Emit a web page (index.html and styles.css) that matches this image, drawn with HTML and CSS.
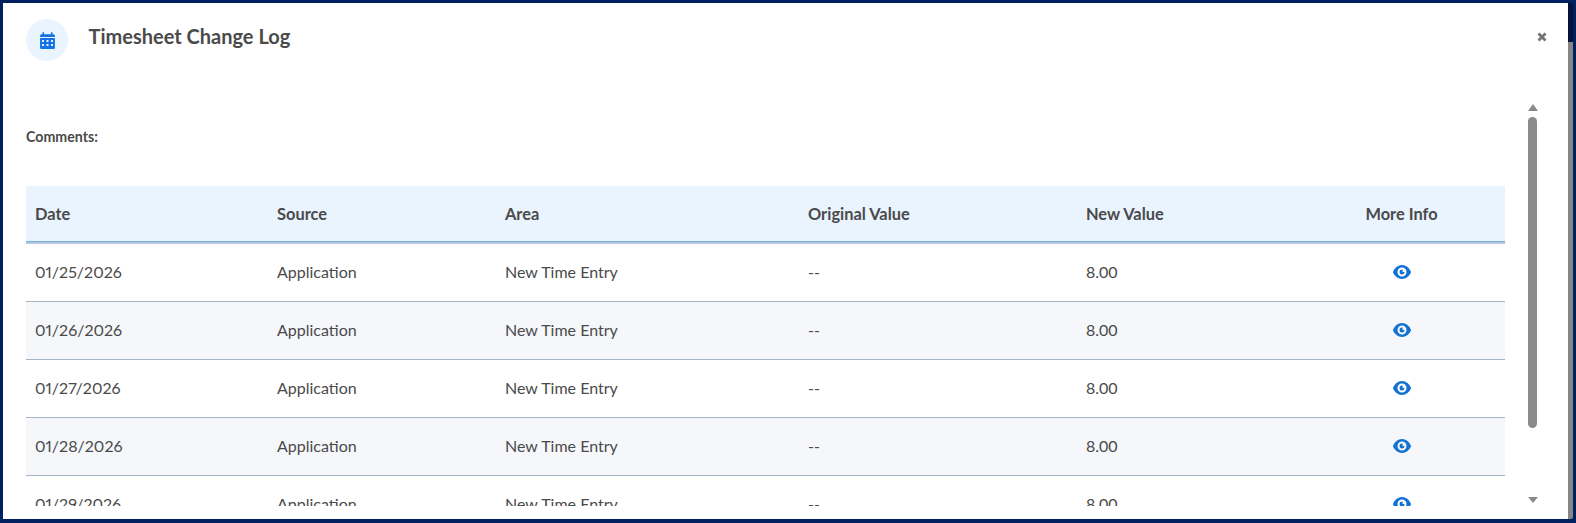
FILE: index.html
```html
<!DOCTYPE html>
<html lang="en">
<head>
    <meta charset="UTF-8">
    <title>Timesheet Change Log</title>
    <link rel="stylesheet" href="styles.css">
</head>
<body>

<div class="frame">
    <div class="modal">
        <div class="modal-header">
            <div class="icon-circle">
                <svg class="calendar-icon" viewBox="0 0 448 512"><path d="M96 0c13 0 24 11 24 24v40h208V24c0-13 11-24 24-24s24 11 24 24v40h24c35 0 48 29 48 64v24H0v-24c0-35 13-64 48-64h24V24C72 11 83 0 96 0zM0 184h448v280c0 27-21 48-48 48H48c-27 0-48-21-48-48V184zm72 56c-9 0-16 7-16 16v32c0 9 7 16 16 16h32c9 0 16-7 16-16v-32c0-9-7-16-16-16H72zm136 0c-9 0-16 7-16 16v32c0 9 7 16 16 16h32c9 0 16-7 16-16v-32c0-9-7-16-16-16h-32zm136 0c-9 0-16 7-16 16v32c0 9 7 16 16 16h32c9 0 16-7 16-16v-32c0-9-7-16-16-16h-32zM72 360c-9 0-16 7-16 16v32c0 9 7 16 16 16h32c9 0 16-7 16-16v-32c0-9-7-16-16-16H72zm136 0c-9 0-16 7-16 16v32c0 9 7 16 16 16h32c9 0 16-7 16-16v-32c0-9-7-16-16-16h-32zm136 0c-9 0-16 7-16 16v32c0 9 7 16 16 16h32c9 0 16-7 16-16v-32c0-9-7-16-16-16h-32z"/></svg>
            </div>
            <h1>Timesheet Change Log</h1>
            <svg class="close-icon" viewBox="0 0 10 10"><path d="M1.5 1.5l7 7M8.5 1.5l-7 7"/></svg>
        </div>

        <div class="modal-body">
            <div class="scroll-area">
                <p class="comments">Comments:</p>
                <table class="log-table">
                    <thead>
                        <tr>
                            <th class="col-date">Date</th>
                            <th class="col-source">Source</th>
                            <th class="col-area">Area</th>
                            <th class="col-original">Original Value</th>
                            <th class="col-new">New Value</th>
                            <th class="col-info">More Info</th>
                        </tr>
                    </thead>
                    <tbody>
                        <tr>
                            <td class="col-date">01/25/2026</td><td>Application</td><td>New Time Entry</td><td>--</td><td>8.00</td>
                            <td class="col-info"><svg class="eye-icon" viewBox="0 0 576 512"><use href="#eye"/></svg></td>
                        </tr>
                        <tr>
                            <td class="col-date">01/26/2026</td><td>Application</td><td>New Time Entry</td><td>--</td><td>8.00</td>
                            <td class="col-info"><svg class="eye-icon" viewBox="0 0 576 512"><use href="#eye"/></svg></td>
                        </tr>
                        <tr>
                            <td class="col-date">01/27/2026</td><td>Application</td><td>New Time Entry</td><td>--</td><td>8.00</td>
                            <td class="col-info"><svg class="eye-icon" viewBox="0 0 576 512"><use href="#eye"/></svg></td>
                        </tr>
                        <tr>
                            <td class="col-date">01/28/2026</td><td>Application</td><td>New Time Entry</td><td>--</td><td>8.00</td>
                            <td class="col-info"><svg class="eye-icon" viewBox="0 0 576 512"><use href="#eye"/></svg></td>
                        </tr>
                        <tr>
                            <td class="col-date">01/29/2026</td><td>Application</td><td>New Time Entry</td><td>--</td><td>8.00</td>
                            <td class="col-info"><svg class="eye-icon" viewBox="0 0 576 512"><use href="#eye"/></svg></td>
                        </tr>
                    </tbody>
                </table>
            </div>
            <div class="scrollbar">
                <span class="arrow-up"></span>
                <div class="thumb"></div>
                <span class="arrow-down"></span>
            </div>
        </div>
    </div>
    <div class="backdrop-strip"></div>
</div>

<svg class="icon-defs" width="0" height="0">
    <defs>
        <path id="eye" fill-rule="evenodd" d="M288 32C207 32 142 69 95 112 48 156 17 208 2 244c-3 8-3 17 0 25 15 36 46 88 93 131 47 44 112 80 193 80s146-36 193-80c47-43 78-95 93-131 3-8 3-17 0-25-15-36-46-88-93-132C434 69 369 32 288 32zm0 80a144 144 0 1 1 0 288 144 144 0 1 1 0-288zm0 64a80 80 0 1 0 78 62c-5 10-16 18-30 18-19 0-34-15-34-34 0-14 8-25 18-30-10-10-21-16-32-16z"/>
    </defs>
</svg>

</body>
</html>
```

FILE: styles.css
```css
html, body {
    margin: 0;
    height: 100%;
}

body {
    font-family: 'Lato', sans-serif;
    color: #4a4a4a;
    overflow: hidden;
}

.frame {
    box-sizing: border-box;
    height: 523px;
    display: flex;
    background-color: #00205f;
    padding: 3px 3px 4px 3px;
}

.modal {
    flex: 1;
    display: flex;
    flex-direction: column;
    min-width: 0;
    background-color: #ffffff;
    overflow: hidden;
}

.backdrop-strip {
    width: 5px;
    background: linear-gradient(#04133a 39px, #868686 39px);
    border-bottom-right-radius: 2px;
}

.modal-header {
    display: flex;
    align-items: flex-start;
    height: 94px;
    padding: 16px 0 0 23px;
    box-sizing: border-box;
    flex-shrink: 0;
}

.icon-circle {
    width: 42px;
    height: 42px;
    border-radius: 50%;
    background-color: #e9f4ff;
    display: flex;
    align-items: center;
    justify-content: center;
}

.calendar-icon {
    width: 15px;
    height: 17px;
    fill: #1473e6;
}

h1 {
    margin: 4px 0 0 20.5px;
    font-size: 20px;
    line-height: 26px;
    font-weight: 700;
    color: #4a4a4a;
}

.close-icon {
    width: 10px;
    height: 10px;
    margin: 13px 21px 0 auto;
    fill: none;
    stroke: #757575;
    stroke-width: 2.8;
}

.modal-body {
    flex: 1;
    display: flex;
    min-height: 0;
}

.scroll-area {
    flex: 1;
    min-width: 0;
    height: 409px;
    overflow: hidden;
    padding: 0 0 0 23px;
}

.comments {
    margin: 32px 0 0 0;
    font-size: 14.2px;
    line-height: 16px;
    font-weight: 700;
}

.log-table {
    width: 1479px;
    margin-top: 41px;
    border-collapse: collapse;
    table-layout: fixed;
    font-size: 16px;
}

.log-table th {
    height: 55px;
    padding: 0 9px 1px;
    text-align: left;
    font-weight: 700;
    font-size: 16.4px;
    background-color: #e9f4ff;
    border-bottom: 2px solid #b9c7d6;
    box-shadow: inset 0 -1px #6fb0de;
}

.log-table td {
    height: 55px;
    padding: 0 9px 2px;
    border-bottom: 1px solid #a3b5c6;
}

.log-table tbody tr:nth-child(even) td {
    background-color: #f5f7fb;
}

.col-date { width: 224px; }
.col-source { width: 210px; }
.col-area { width: 285px; }
.col-original { width: 260px; }
.col-new { width: 203px; }

.log-table td.col-date {
    font-variant-numeric: proportional-nums;
}

.log-table .col-info {
    text-align: center;
}

.log-table td.col-info {
    padding-bottom: 1px;
}

.eye-icon {
    display: block;
    width: 18px;
    height: 16px;
    margin: 0 auto;
    fill: #1473d2;
}

.icon-defs {
    position: absolute;
}

/* drawn scrollbar, the real one is hidden by the clip */
.scrollbar {
    width: 9px;
    margin: 7px 31px 0 20px;
    height: 402px;
    display: flex;
    flex-direction: column;
    align-items: center;
}

.arrow-up {
    width: 0;
    height: 0;
    border-left: 5px solid transparent;
    border-right: 5px solid transparent;
    border-bottom: 7px solid #8a8a8a;
}

.thumb {
    width: 9px;
    height: 311px;
    margin-top: 6px;
    border-radius: 5px;
    background-color: #8a8a8a;
}

.arrow-down {
    width: 0;
    height: 0;
    margin-top: 69px;
    border-left: 5px solid transparent;
    border-right: 5px solid transparent;
    border-top: 6px solid #8a8a8a;
}
```
